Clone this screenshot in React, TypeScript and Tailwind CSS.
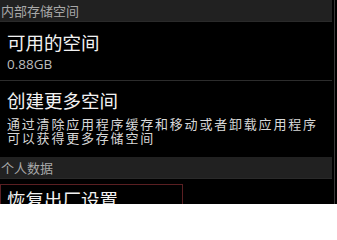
const cjk = "font-['Noto_Sans_CJK_SC','Noto_Sans',sans-serif]";

function SectionHeader({ label }: { label: string }) {
  return (
    <div className="h-[22px] shrink-0 bg-[#212121] flex items-center pl-[1px] border-b border-[#2a2a2a]">
      <span className="text-[13px] leading-[13px] text-[#a9a9a9]">{label}</span>
    </div>
  );
}

export default function App() {
  return (
    <div className={`w-[337px] h-[204px] bg-black overflow-hidden flex ${cjk}`}>
      <div className="w-[332px] flex flex-col">
        <SectionHeader label="内部存储空间" />

        {/* Available space */}
        <div className="h-[59px] shrink-0 border-b border-[#2c2c2c] pl-[7px] pt-[9px]">
          <p className="text-[18.5px] leading-[22px] text-[#f2f2f2]">可用的空间</p>
          <p className="mt-[4px] text-[13.5px] leading-[14px] text-[#bdbdbd] font-['Open_Sans',sans-serif]">
            0.88GB
          </p>
        </div>

        {/* Free up space */}
        <div className="h-[76px] shrink-0 pl-[7px] pt-[8px]">
          <p className="text-[18.5px] leading-[22px] text-[#f2f2f2]">创建更多空间</p>
          <p className="mt-[6px] text-[13px] leading-[13.5px] tracking-[1.8px] text-[#d8d8d8] whitespace-nowrap">
            通过清除应用程序缓存和移动或者卸载应用程序
            <br />
            可以获得更多存储空间
          </p>
        </div>

        <SectionHeader label="个人数据" />

        {/* Factory reset (focused) */}
        <div className="mt-[5px] shrink-0 w-[183px] h-[40px] border border-[#5a1f22] pl-[6px] pt-[3px]">
          <p className="text-[18.5px] leading-[22px] text-[#f2f2f2] whitespace-nowrap">恢复出厂设置</p>
        </div>
      </div>
      <div className="w-[5px] flex justify-center">
        <div className="w-[1px] h-full bg-[#3a3a3a]" />
      </div>
    </div>
  );
}
